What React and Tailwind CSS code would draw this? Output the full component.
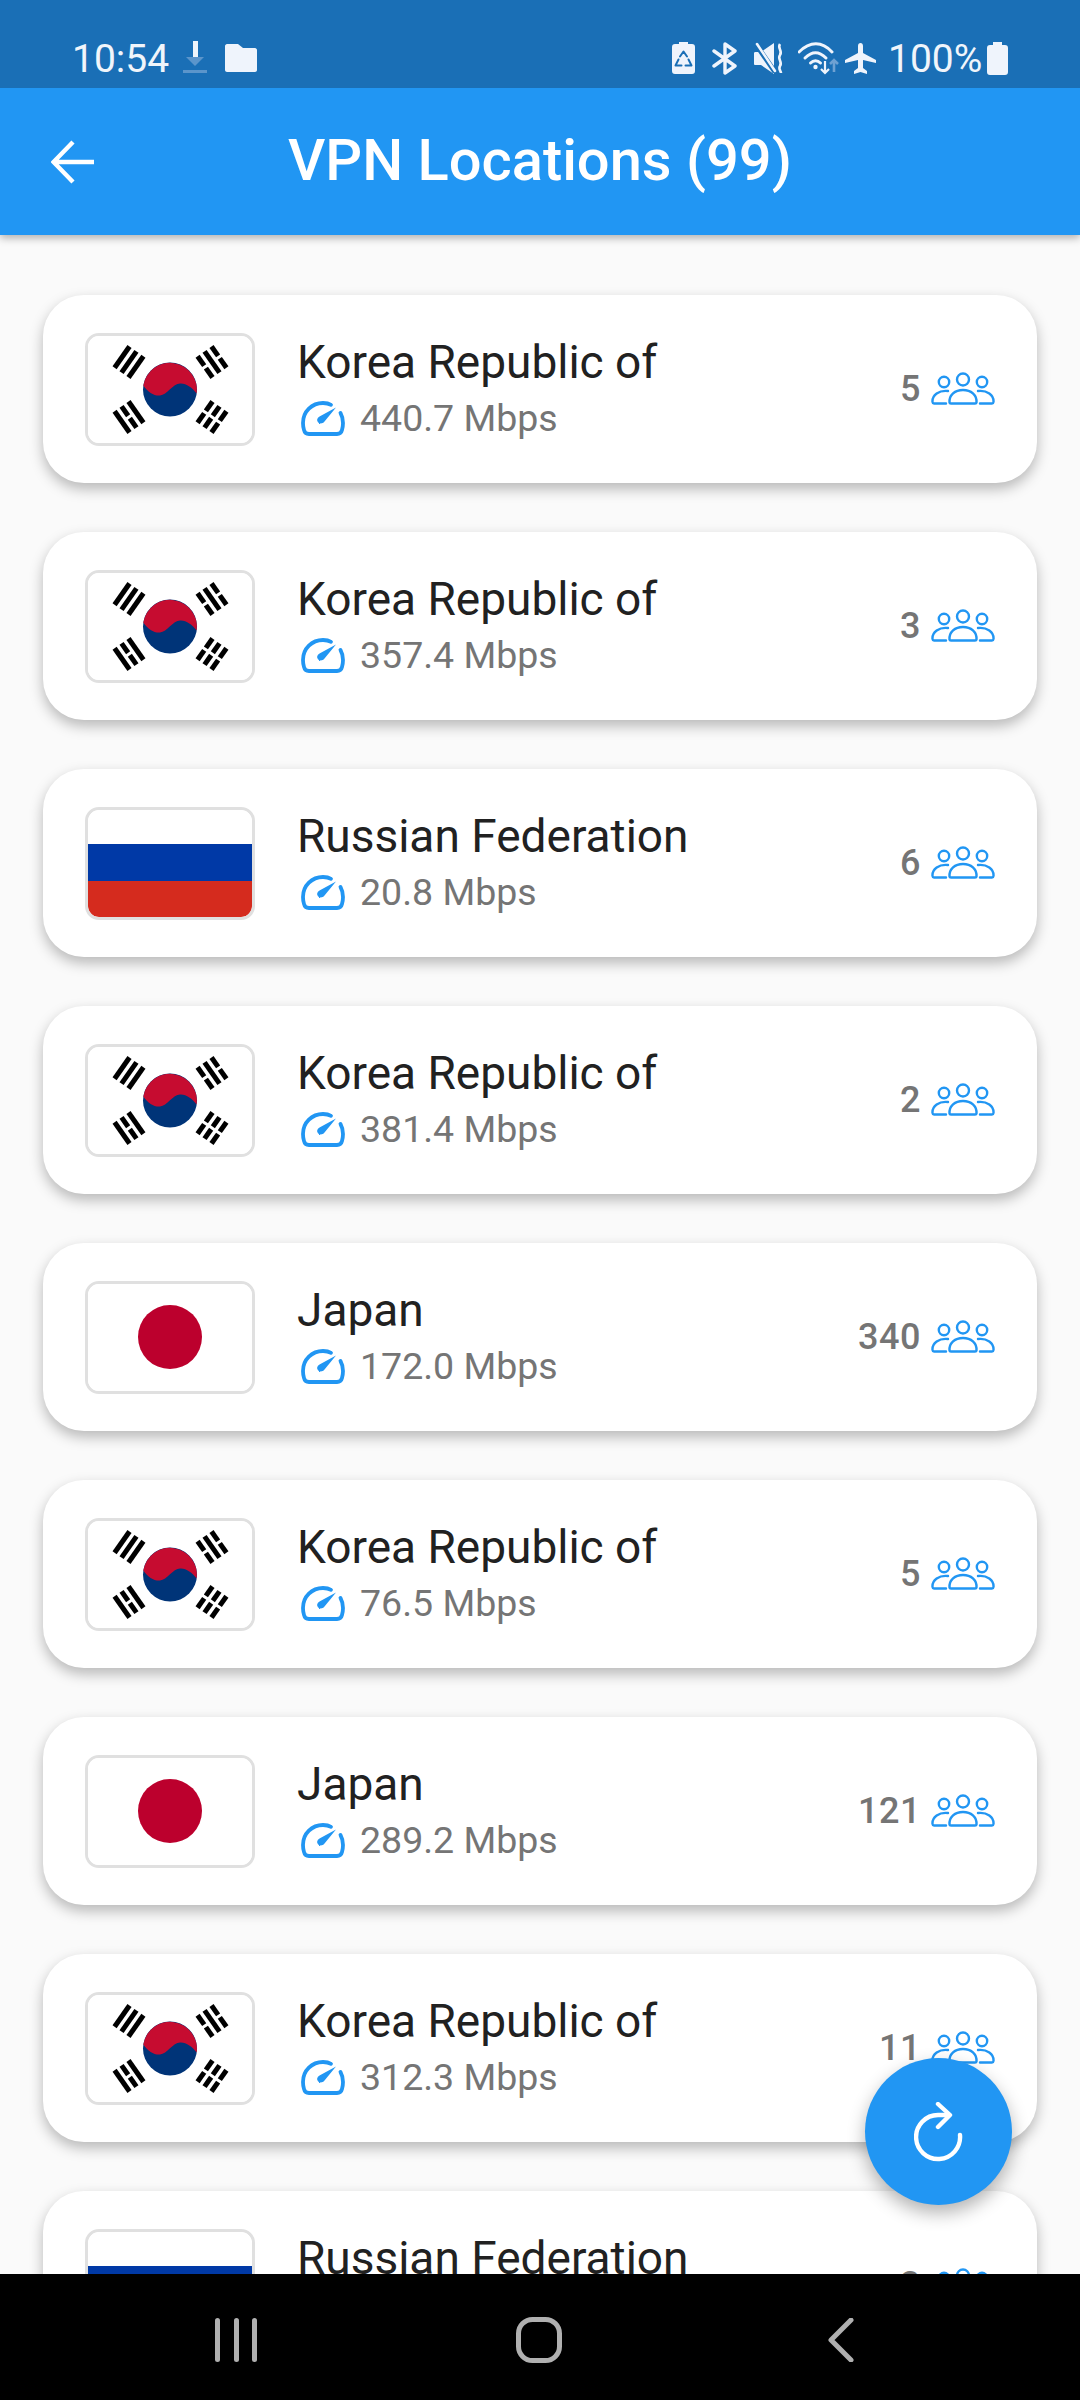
const Tri = ({ x, y, rot, pattern }) => (
  <g transform={`translate(${x} ${y}) rotate(${rot})`} fill="#000">
    {pattern.map((broken, i) => {
      const cy = -8.5 + i * 8.5;
      return broken ? (
        <g key={i}>
          <rect x="-13" y={cy - 2.5} width="11.500" height="5" />
          <rect x="1.500" y={cy - 2.5} width="11.500" height="5" />
        </g>
      ) : (
        <rect key={i} x="-13" y={cy - 2.5} width="26" height="5" />
      );
    })}
  </g>
);

const KoreaFlag = () => (
  <svg viewBox="0 0 164 107" className="w-full h-full block">
    <rect width="164" height="107" fill="#fff" />
    <Tri x={41} y={26} rot={-55} pattern={[0, 0, 0]} />
    <Tri x={124} y={26} rot={55} pattern={[1, 0, 1]} />
    <Tri x={41} y={81} rot={55} pattern={[0, 1, 0]} />
    <Tri x={124} y={81} rot={-55} pattern={[1, 1, 1]} />
    <g transform="translate(82 53.500)">
      <circle r="27" fill="#003478" />
      <path d="M-26.700 -4C-22 3 -16 6.500 -10 6C-3 5.500 3 -6 10 -6C16 -6.500 22 -2 26.700 4A27 27 0 0 0 -26.700 -4Z" fill="#c60c30" />
    </g>
  </svg>
);

const RussiaFlag = () => (
  <div className="w-full h-full flex flex-col rounded-[11px] overflow-hidden">
    <div className="h-[34px] bg-white" />
    <div className="h-[37px] bg-[#0039a6]" />
    <div className="flex-1 bg-[#d52b1e]" />
  </div>
);

const JapanFlag = () => (
  <div className="w-full h-full flex items-center justify-center bg-white">
    <div className="w-[64px] h-[64px] rounded-full bg-[#bc002d]" />
  </div>
);

const Flag = ({ kind }) => (
  <div className="w-[170px] h-[113px] shrink-0 border-[3px] border-[#e0e0e0] rounded-[14px] bg-white overflow-hidden">
    {kind === "kr" ? <KoreaFlag /> : kind === "ru" ? <RussiaFlag /> : <JapanFlag />}
  </div>
);

const Gauge = () => (
  <svg width="44" height="36" viewBox="0 0 44 36" fill="none" className="shrink-0 ml-[4px]">
    <path d="M9 34H8C5 34 3.5 32.5 3 30C2 27 2 25 2 23C2 11.5 11 3 22 3C25.5 3 28 3.6 30 4.8M39.5 13C41.2 16 42 19.5 42 23C42 25.5 41.6 28 41 30C40.4 32.5 39 34 36 34H9" stroke="#2196f3" strokeWidth="3.8" strokeLinecap="round" />
    <path d="M35 7.5L23.5 21.5C21.5 24 18.5 24 17 22.3C15.4 20.5 16 18 18.5 16.5Z" fill="#2196f3" />
  </svg>
);

const People = () => (
  <svg width="64" height="34" viewBox="0 0 64 34" fill="none" stroke="#2196f3" strokeWidth="2.400" className="shrink-0">
    <circle cx="13" cy="10" r="5.200" />
    <circle cx="32" cy="7.500" r="6" />
    <circle cx="51" cy="10" r="5.200" />
    <path d="M18.500 30.500C18 23 24 18 32 18C40 18 46 23 45.500 30.500C45.400 31.300 45 31.500 44 31.500H20C19 31.500 18.600 31.300 18.500 30.500Z" />
    <path d="M17 19C8 18 1 23 1.500 30C1.600 31 2 31.500 3 31.500H15" strokeLinecap="round" />
    <path d="M47 19C56 18 63 23 62.500 30C62.400 31 62 31.500 61 31.500H49" strokeLinecap="round" />
  </svg>
);

const rows = [
  ["kr", "Korea Republic of", "440.7 Mbps", "5"],
  ["kr", "Korea Republic of", "357.4 Mbps", "3"],
  ["ru", "Russian Federation", "20.8 Mbps", "6"],
  ["kr", "Korea Republic of", "381.4 Mbps", "2"],
  ["jp", "Japan", "172.0 Mbps", "340"],
  ["kr", "Korea Republic of", "76.5 Mbps", "5"],
  ["jp", "Japan", "289.2 Mbps", "121"],
  ["kr", "Korea Republic of", "312.3 Mbps", "11"],
  ["ru", "Russian Federation", "34.1 Mbps", "3"],
];

const Card = ({ kind, name, speed, count }) => (
  <div className="h-[188px] shrink-0 mx-[43px] rounded-[41px] bg-white pl-[42px] pr-[42px] flex items-center shadow-[0_6px_14px_rgba(0,0,0,0.27)]">
    <Flag kind={kind} />
    <div className="ml-[42px] flex-1 min-w-0 flex flex-col pb-[2px]">
      <div className="text-[46px] leading-[52px] text-[#212121]">{name}</div>
      <div className="flex items-center gap-[15px] h-[44px] mt-[8px]">
        <Gauge />
        <span className="text-[37.5px] leading-[44px] text-[#757575]">{speed}</span>
      </div>
    </div>
    <div className="flex items-center gap-[10px]">
      <span className="text-[36px] leading-[40px] font-medium text-[#757575] tracking-[0.5px]">{count}</span>
      <People />
    </div>
  </div>
);

const StatusLeft = () => (
  <div className="flex items-center">
    <span className="text-[39px] leading-[46px] text-[#f0f5fb] ml-[72px] w-[111px] translate-y-[1px]">10:54</span>
    <svg width="24" height="34" viewBox="0 0 24 34" className="shrink-0">
      <rect x="10" y="0" width="5" height="17" fill="#eef4fb" />
      <path d="M3 16H21L12 25Z" fill="#5b95cb" />
      <rect x="0" y="29" width="24" height="3" fill="#5b95cb" />
    </svg>
    <svg width="32" height="28" viewBox="0 0 32 28" className="shrink-0 ml-[18px]">
      <path d="M2 0H13L18 4H30C31 4 32 5 32 6V26C32 27 31 28 30 28H2C1 28 0 27 0 26V2C0 1 1 0 2 0Z" fill="#eff4fc" />
    </svg>
  </div>
);

const StatusRight = () => (
  <div className="flex items-center">
    <svg width="23" height="32" viewBox="0 0 23 32" className="shrink-0">
      <path d="M7 0H16V2H20C22 2 23 3 23 5V29C23 31 22 32 20 32H3C1 32 0 31 0 29V5C0 3 1 2 3 2H7Z" fill="#eff4fc" />
      <path d="M8 14.500L11.500 9.500L15 14.500M16.500 17.500L19.500 23.500H13.500M9.500 23.500H3.500L6.500 17.500" stroke="#1a6fb6" strokeWidth="2" fill="none" strokeLinecap="round" strokeLinejoin="round" />
    </svg>
    <svg width="28" height="33" viewBox="0 0 28 33" fill="none" stroke="#eff4fc" strokeWidth="3.400" strokeLinejoin="round" strokeLinecap="round" className="shrink-0 ml-[16px]">
      <path d="M3 9L24 24L14 31V2L24 9L3 24" />
    </svg>
    <svg width="30" height="33" viewBox="0 0 30 33" className="shrink-0 ml-[15px]">
      <path d="M0 11C0 10 1 10 2 10H7L20 1V32L7 23H2C1 23 0 23 0 22Z" fill="#eff4fc" />
      <path d="M1 1L21 30" stroke="#1a6fb6" strokeWidth="5" />
      <path d="M3 2L21 29" stroke="#eff4fc" strokeWidth="2.600" strokeLinecap="round" />
      <path d="M26 2C23 6 29 9 26 13C23 17 29 20 26 24C24 27 27 29 27 31" stroke="#eff4fc" strokeWidth="2.600" fill="none" />
    </svg>
    <svg width="42" height="33" viewBox="0 0 42 33" fill="none" className="shrink-0 ml-[14px]">
      <path d="M1 10C12 -1 24 -1 34 10" stroke="#eff4fc" strokeWidth="3" strokeLinecap="round" />
      <path d="M7 16C14 9 21 9 28 16" stroke="#eff4fc" strokeWidth="3" strokeLinecap="round" />
      <path d="M12.500 21C15.500 18 19.500 18 22.500 21" stroke="#eff4fc" strokeWidth="3" strokeLinecap="round" />
      <circle cx="17.500" cy="25" r="2.200" fill="#eff4fc" />
      <path d="M27 19V31M23 27L27 31L31 27" stroke="#eff4fc" strokeWidth="2.200" />
      <path d="M36 30V18M32 22L36 18L40 22" stroke="#6ea1d2" strokeWidth="2.600" />
    </svg>
    <svg width="31" height="31" viewBox="0 0 31 31" className="shrink-0 ml-[5px]">
      <path d="M13 3C13 1 14 0 15.500 0C17 0 18 1 18 3V10L31 17V20L18 17V25L22 28V31L15.500 29L9 31V28L13 25V17L0 20V17L13 10Z" fill="#eff4fc" />
    </svg>
    <span className="text-[39px] leading-[46px] text-[#f0f5fb] ml-[12px] w-[95px] translate-y-[1px]">100%</span>
    <svg width="21" height="33" viewBox="0 0 21 33" className="shrink-0 ml-[4px]">
      <path d="M6 0H15V3H18C20 3 21 4 21 6V30C21 32 20 33 18 33H3C1 33 0 32 0 30V6C0 4 1 3 3 3H6Z" fill="#eff4fc" />
    </svg>
  </div>
);

export default function App() {
  return (
    <div className="relative w-[1080px] h-[2400px] overflow-hidden bg-[#fafafa] flex flex-col font-['Roboto',sans-serif]">
      <div className="relative z-10 shadow-[0_3px_8px_rgba(0,0,0,0.3)]">
        <div className="h-[88px] bg-[#1a6fb6] flex items-center justify-between pt-[28px] pr-[72px]">
          <StatusLeft />
          <StatusRight />
        </div>
        <div className="h-[147px] bg-[#2196f3] flex items-center">
          <svg width="44" height="44" viewBox="0 0 44 44" fill="none" stroke="#fff" strokeWidth="4.400" className="ml-[51px] shrink-0">
            <path d="M43 22H3M22 2L2.500 22L22 42" />
          </svg>
          <span className="ml-[193px] text-[57.8px] leading-[64px] font-medium text-white -translate-y-[2px]">VPN Locations (99)</span>
        </div>
      </div>

      <div className="flex-1 min-h-0 overflow-hidden flex flex-col gap-[49px] pt-[60px]">
        {rows.map((r, i) => (
          <Card key={i} kind={r[0]} name={r[1]} speed={r[2]} count={r[3]} />
        ))}
      </div>

      <div className="relative z-10 h-[126px] shrink-0 bg-black flex items-center pt-[6px]">
        <svg width="42" height="44" viewBox="0 0 42 44" className="ml-[215px] shrink-0" fill="#b0b0b0">
          <rect x="0" y="0" width="5" height="44" rx="2.500" />
          <rect x="19" y="0" width="5" height="44" rx="2.500" />
          <rect x="37" y="0" width="5" height="44" rx="2.500" />
        </svg>
        <svg width="46" height="46" viewBox="0 0 46 46" fill="none" className="ml-[259px] shrink-0">
          <rect x="2.500" y="2.500" width="41" height="41" rx="14" stroke="#b0b0b0" strokeWidth="5" />
        </svg>
        <svg width="26" height="44" viewBox="0 0 26 44" fill="none" className="ml-[266px] shrink-0">
          <path d="M23 2L3 22L23 42" stroke="#b0b0b0" strokeWidth="5" strokeLinecap="round" strokeLinejoin="round" />
        </svg>
      </div>

      <div className="absolute z-20 left-[865px] top-[2058px] w-[147px] h-[147px] rounded-full bg-[#2196f3] flex items-center justify-center shadow-[0_8px_18px_rgba(0,0,0,0.3)]">
        <svg width="50" height="60" viewBox="0 0 50 60" fill="none" stroke="#fff" strokeWidth="4.400" strokeLinecap="round" strokeLinejoin="round">
          <path d="M46 33A22 22 0 1 1 24 13H35" />
          <path d="M24 2L36 13L24 25" />
        </svg>
      </div>
    </div>
  );
}
